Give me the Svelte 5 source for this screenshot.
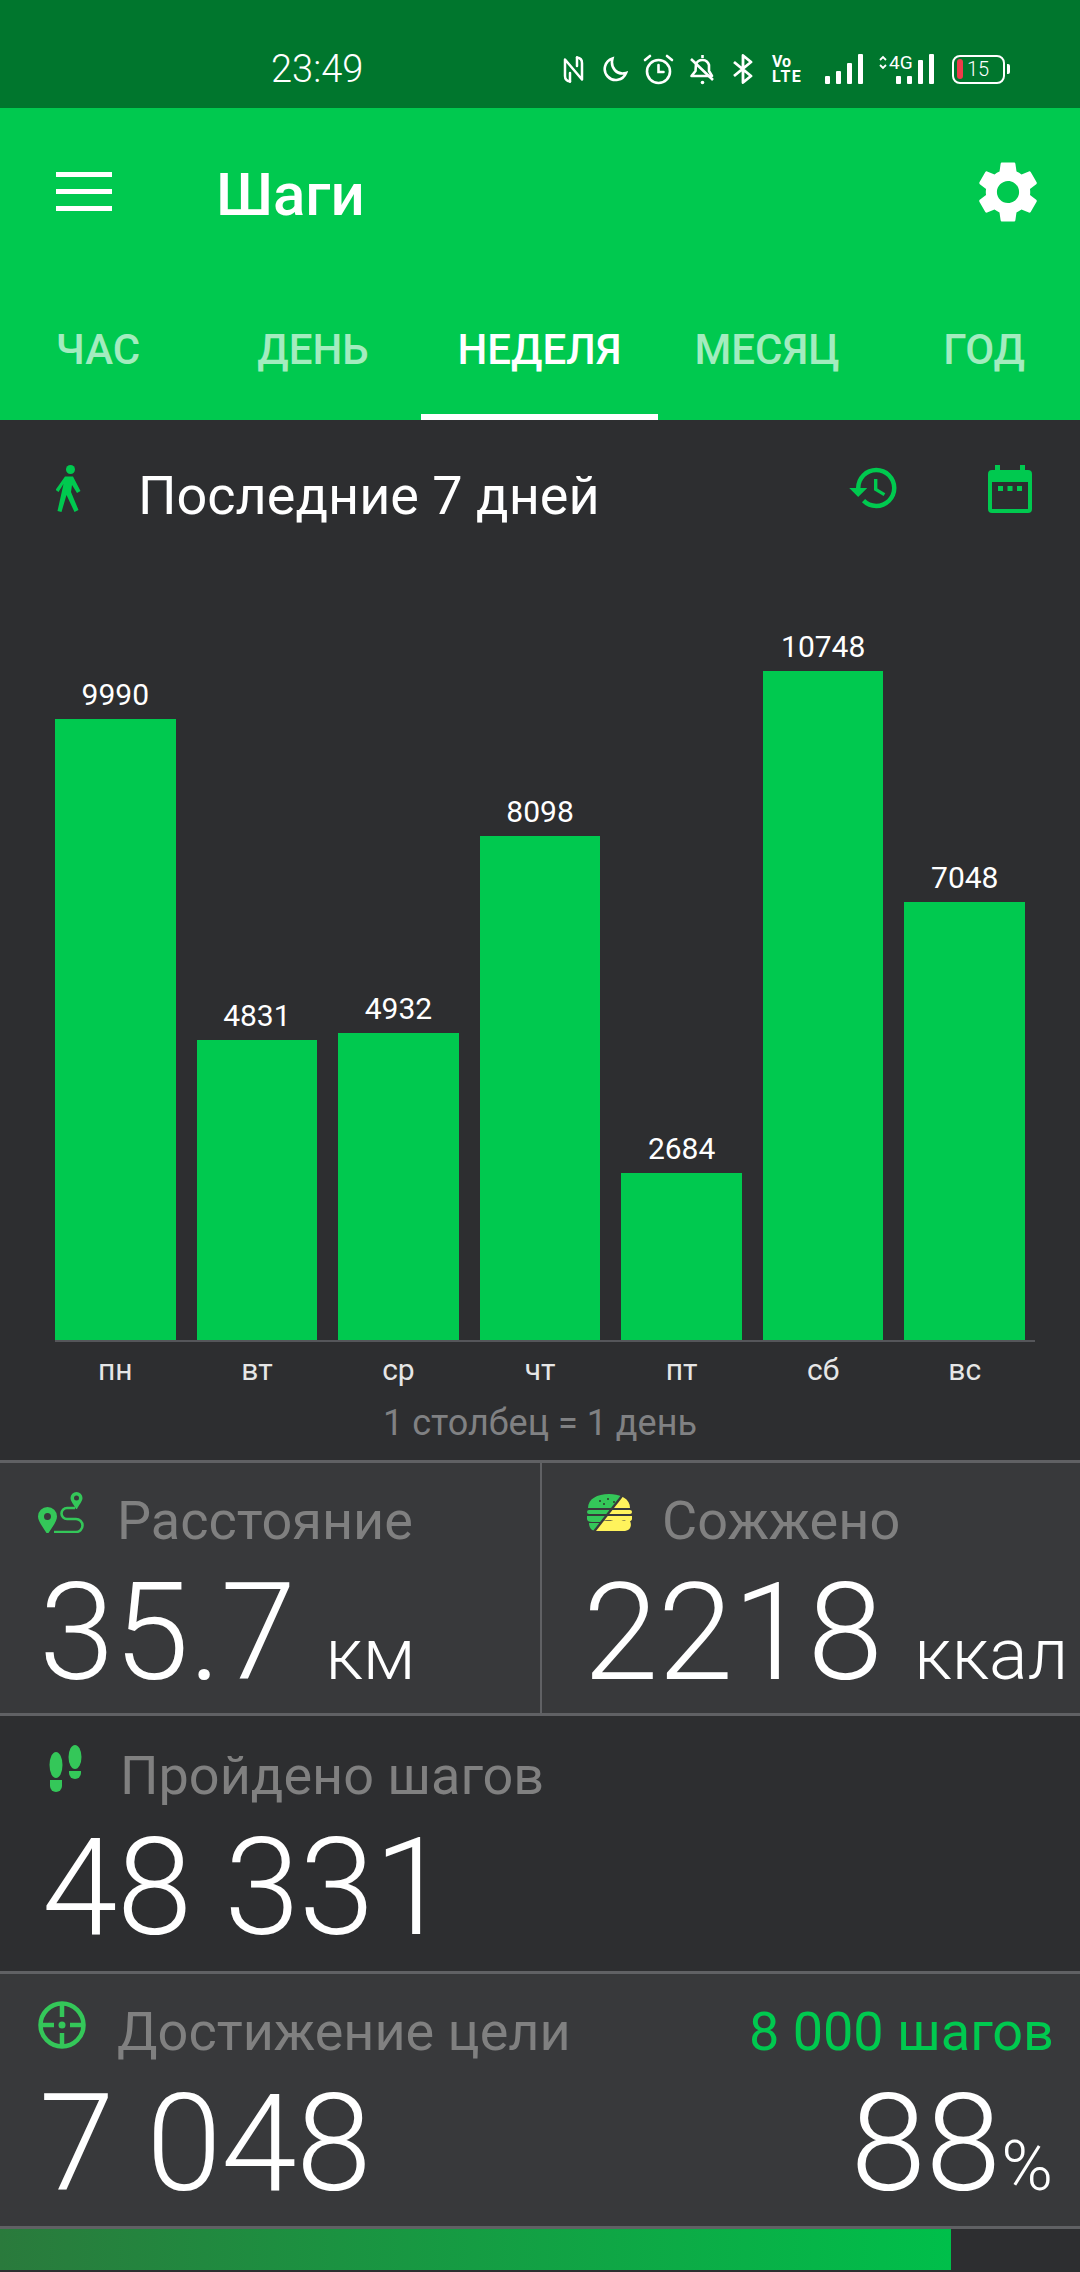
<script>
  const tabs = ["ЧАС", "ДЕНЬ", "НЕДЕЛЯ", "МЕСЯЦ", "ГОД"];
  const days = [
    { day: "пн", steps: 9990 },
    { day: "вт", steps: 4831 },
    { day: "ср", steps: 4932 },
    { day: "чт", steps: 8098 },
    { day: "пт", steps: 2684 },
    { day: "сб", steps: 10748 },
    { day: "вс", steps: 7048 }
  ];
  const scale = 0.0622;
</script>

<div class="page">
  <div class="status">
    <span class="time">23:49</span>
    <div class="sysicons">
      <svg class="ic-nfc" viewBox="0 0 21 27" width="21" height="27" fill="none" stroke="#fff" stroke-width="2.500" stroke-linejoin="round" stroke-linecap="round">
        <path d="M7 25.500C3.500 25 2 23.500 2 20V3.500L19 23.500V7C19 3.500 17.500 2 14 1.500" />
        <path d="M7 17v8.500M14 1.500V10" />
      </svg>
      <svg class="ic-moon" viewBox="0 0 26 26" width="26" height="26" fill="none" stroke="#fff" stroke-width="2.600">
        <path d="M10.500 2.500a11 11 0 1 0 13.500 14.500C15 19.500 8 12 10.500 2.500z" />
      </svg>
      <svg class="ic-alarm" viewBox="0 0 31 31" width="31" height="31" fill="none" stroke="#fff" stroke-width="2.600" stroke-linecap="round">
        <circle cx="15.500" cy="17.500" r="11.500" />
        <path d="M15.500 11v7h5M2 6l5-4M29 6l-5-4" />
      </svg>
      <svg class="ic-bell" viewBox="0 0 27 31" width="27" height="31" fill="none" stroke="#fff" stroke-width="2.600" stroke-linejoin="round">
        <path d="M7 10a7 7 0 0 1 13 1v6l3 5H2.500l4-5z" />
        <path d="M2 5l22 21M13.500 1v3" />
        <circle cx="13.500" cy="28.500" r="1.800" fill="#fff" stroke="none" />
      </svg>
      <svg class="ic-bt" viewBox="0 0 22 30" width="22" height="30" fill="none" stroke="#fff" stroke-width="2.800" stroke-linejoin="round">
        <path d="M2 8l17 14-8 6.500V1.500L19 8 2 22" />
      </svg>
      <div class="volte"><span>Vo</span><span class="lte">LTE</span></div>
      <div class="signal">
        <i class="s1"></i><i class="s2"></i><i class="s3"></i><i class="s4"></i>
      </div>
      <div class="net">
        <svg viewBox="0 0 8 15" width="8" height="15" fill="none" stroke="#fff" stroke-width="1.800">
          <path d="M1 5l3-3 3 3M1 10l3 3 3-3" />
        </svg>
        <span>4G</span>
        <div class="signal small">
          <i class="s1"></i><i class="s2"></i><i class="s3"></i><i class="s4"></i>
        </div>
      </div>
      <div class="battery">
        <div class="cell"><i></i><span>15</span></div>
        <b></b>
      </div>
    </div>
  </div>

  <header class="appbar">
    <div class="toolbar">
      <div class="menu"><i></i><i></i><i></i></div>
      <h1>Шаги</h1>
      <svg class="gear" viewBox="0 0 24 24" width="74" height="74" fill="#fff">
        <path d="M19.14 12.94c.04-.3.06-.61.06-.94 0-.32-.02-.64-.07-.94l2.03-1.58c.18-.14.23-.41.12-.61l-1.92-3.32c-.12-.22-.37-.29-.59-.22l-2.39.96c-.5-.38-1.03-.7-1.62-.94l-.36-2.54c-.04-.24-.24-.41-.48-.41h-3.84c-.24 0-.43.17-.47.41l-.36 2.54c-.59.24-1.13.57-1.62.94l-2.39-.96c-.22-.08-.47 0-.59.22L2.74 8.87c-.12.21-.08.47.12.61l2.03 1.58c-.05.3-.09.63-.09.94s.02.64.07.94l-2.03 1.58c-.18.14-.23.41-.12.61l1.92 3.32c.12.22.37.29.59.22l2.39-.96c.5.38 1.03.7 1.62.94l.36 2.54c.05.24.24.41.48.41h3.84c.24 0 .44-.17.47-.41l.36-2.54c.59-.24 1.13-.56 1.62-.94l2.39.96c.22.08.47 0 .59-.22l1.92-3.32c.12-.22.07-.47-.12-.61l-2.01-1.58zM12 15.6c-1.98 0-3.6-1.62-3.6-3.6s1.62-3.6 3.6-3.6 3.6 1.62 3.6 3.6-1.62 3.6-3.6 3.6z" />
      </svg>
    </div>
    <nav class="tabs">
      {#each tabs as tab, i}
        <div class="tab" class:active={i === 2}>{tab}</div>
      {/each}
    </nav>
  </header>

  <section class="range">
    <svg class="walk" viewBox="0 0 26 48" width="26" height="48">
      <circle cx="14.500" cy="4.500" r="4.500" fill="#00c94f" />
      <path d="M9 11.500h8l7.500 14.500-3.500 2-5-8-1 7 7.500 18-4 2-8-17-5 17-4-1 6-27-5 8-3-2z" fill="#00c94f" />
    </svg>
    <h2>Последние 7 дней</h2>
    <svg class="history" viewBox="0 0 24 24" width="54" height="54" fill="#00c94f">
      <path d="M13 3a9 9 0 0 0-9 9H1l3.890 3.890.07.14L9 12H6c0-3.870 3.130-7 7-7s7 3.130 7 7-3.130 7-7 7c-1.930 0-3.680-.79-4.940-2.060l-1.420 1.420A8.954 8.954 0 0 0 13 21a9 9 0 0 0 0-18zm-1 5v5l4.280 2.540.72-1.210-3.500-2.080V8H12z" />
    </svg>
    <svg class="calendar" viewBox="0 0 44 48" width="44" height="48" fill="#00c94f">
      <path d="M7 0h5v5h20V0h5v5h3a4 4 0 0 1 4 4v35a4 4 0 0 1-4 4H4a4 4 0 0 1-4-4V9a4 4 0 0 1 4-4h3zM4 17v27h36V17z" fill-rule="evenodd" />
      <rect x="10" y="21" width="5" height="5" /><rect x="19.500" y="21" width="5" height="5" /><rect x="29" y="21" width="5" height="5" />
    </svg>
  </section>

  <section class="chart">
    {#each days as d}
      <div class="col">
        <span class="val">{d.steps}</span>
        <div class="bar" style="height: {d.steps * scale}px"></div>
      </div>
    {/each}
  </section>
  <div class="baseline"></div>
  <div class="axis">
    {#each days as d}
      <span>{d.day}</span>
    {/each}
  </div>
  <div class="note">1 столбец = 1 день</div>

  <section class="stat split">
    <div class="half left">
      <div class="label">
        <svg class="pin" viewBox="0 0 49 41" width="49" height="41">
          <path d="M9.500 15a9.500 9.500 0 0 1 9.500 9.500c0 5-5 11-8.500 16.500h-2C5 35 0 29.500 0 24.500A9.500 9.500 0 0 1 9.500 15z M9.500 21a3.500 3.500 0 1 0 0 7 3.500 3.500 0 0 0 0-7z" fill="#34c759" fill-rule="evenodd" />
          <path d="M38.500 0a6 6 0 0 1 6 6c0 3-3.500 7-5.500 11h-1c-2-4-5.500-8-5.500-11a6 6 0 0 1 6-6z M38.500 3.500a2.500 2.500 0 1 0 0 5 2.500 2.500 0 0 0 0-5z" fill="#34c759" fill-rule="evenodd" />
          <path d="M37 16H29a5.500 5.500 0 0 0 0 11h9a6.500 6.500 0 0 1 0 13H16" fill="none" stroke="#34c759" stroke-width="2.600" />
        </svg>
        <span>Расстояние</span>
      </div>
      <div class="value"><span class="num">35.7</span><span class="unit">км</span></div>
    </div>
    <div class="half right">
      <div class="label">
        <svg class="burger" viewBox="0 0 45 37" width="45" height="37">
          <defs>
            <clipPath id="tl"><path d="M0 0H35L6 37H0z" /></clipPath>
            <clipPath id="br"><path d="M38 0H45V37H9z" /></clipPath>
          </defs>
          <g clip-path="url(#tl)" fill="#34c759">
            <path d="M1 14C1 5 10 0 22 0s21 5 21 14z" />
            <rect x="0" y="16" width="45" height="4" rx="2" />
            <path d="M0 22h45v3c0 2-3 3-5 3H5c-3 0-5-1-5-3z" />
            <path d="M2 29h41c0 5-3 8-7 8H9c-4 0-7-3-7-8z" />
          </g>
          <g fill="#2e3a2c">
            <circle cx="13" cy="7" r="1" /><circle cx="21" cy="5" r="1" /><circle cx="27" cy="8" r="1" /><circle cx="17" cy="10" r="1" />
          </g>
          <g clip-path="url(#br)" fill="#fff35c">
            <path d="M1 14C1 5 10 0 22 0s21 5 21 14z" />
            <rect x="0" y="16" width="45" height="4" rx="2" />
            <path d="M14 22h31v3c0 2-3 3-6 2-5-2-6 3-10 1-4-2-8-2-15-1H5z" />
            <path d="M5 27h38c2 4 1 10-7 10H9z" />
          </g>
        </svg>
        <span>Сожжено</span>
      </div>
      <div class="value"><span class="num">2218</span><span class="unit">ккал</span></div>
    </div>
  </section>

  <section class="stat steps">
    <div class="label">
      <svg class="feet" viewBox="0 0 34 47" width="34" height="47" fill="#34c759">
        <ellipse cx="7" cy="20" rx="6.500" ry="13" />
        <path d="M1 35h12v6a6 6 0 0 1-12 0z" />
        <ellipse cx="26" cy="12" rx="6.500" ry="12" />
        <path d="M20 26h12v2a6 6 0 0 1-12 0z" />
      </svg>
      <span>Пройдено шагов</span>
    </div>
    <div class="value"><span class="num">48 331</span></div>
  </section>

  <section class="stat goal">
    <div class="label">
      <svg class="target" viewBox="0 0 48 48" width="48" height="48" fill="none" stroke="#34c759" stroke-width="4.500">
        <circle cx="24" cy="24" r="21.500" />
        <path d="M24 4v12M24 32v12M4 24h12M32 24h12" />
        <circle cx="24" cy="24" r="3.500" fill="#34c759" stroke="none" />
      </svg>
      <span>Достижение цели</span>
      <span class="target-text">8 000 шагов</span>
    </div>
    <div class="value between">
      <span class="num">7 048</span>
      <span class="pct"><span class="num">88</span><span class="sign">%</span></span>
    </div>
  </section>

  <div class="progress"><div class="fill" style="width: {(7048 / 8000) * 1080}px"></div></div>
</div>

<style>
  :global(body) {
    margin: 0;
    background: #2d2e30;
  }
  .page {
    width: 1080px;
    height: 2272px;
    overflow: hidden;
    font-family: Roboto, "Noto Sans", sans-serif;
    color: #fff;
    background: #2d2e30;
    display: flex;
    flex-direction: column;
  }

  .status {
    height: 108px;
    flex: none;
    background: #00762d;
    display: flex;
    align-items: center;
    padding-left: 271px;
    box-sizing: border-box;
  }
  .time {
    font-size: 38px;
    font-weight: 300;
    width: 292px;
    position: relative;
    top: 15px;
  }
  .sysicons {
    display: flex;
    align-items: center;
    height: 34px;
    margin-top: 30px;
  }
  .ic-moon { margin-left: 18px; }
  .ic-alarm { margin-left: 15px; }
  .ic-bell { margin-left: 15px; }
  .ic-bt { margin-left: 16px; }
  .volte {
    margin-left: 18px;
    width: 35px;
    font-size: 16px;
    font-weight: 700;
    line-height: 15px;
    display: flex;
    flex-direction: column;
  }
  .lte { letter-spacing: 1.500px; }
  .signal {
    margin-left: 18px;
    display: flex;
    align-items: flex-end;
    gap: 6px;
    height: 30px;
  }
  .signal i {
    width: 5px;
    background: #fff;
    border-radius: 1px;
  }
  .s1 { height: 8px; }
  .s2 { height: 13px; }
  .s3 { height: 21px; }
  .s4 { height: 30px; }
  .net {
    margin-left: 16px;
    display: flex;
    align-items: flex-start;
    position: relative;
    width: 55px;
    height: 30px;
    font-size: 19px;
    line-height: 18px;
  }
  .net svg { margin-right: 2px; margin-top: 1px; flex: none; }
  .signal.small {
    position: absolute;
    right: 0;
    top: 0;
    margin: 0;
    gap: 6px;
  }
  .signal.small .s1,
  .signal.small .s2 { height: 8px; }
  .signal.small .s3 { height: 24px; }
  .signal.small .s4 { height: 30px; }
  .net > span { position: relative; }
  .battery {
    margin-left: 18px;
    display: flex;
    align-items: center;
  }
  .cell {
    width: 53px;
    height: 29px;
    border: 2.500px solid #fff;
    border-radius: 8px;
    display: flex;
    align-items: center;
    gap: 4px;
    padding-left: 3px;
    box-sizing: border-box;
    font-size: 20px;
    font-weight: 300;
  }
  .cell i {
    width: 6px;
    height: 20px;
    background: #ef3b4a;
    border-radius: 3px;
  }
  .battery b {
    width: 3px;
    height: 10px;
    background: #fff;
    margin-left: 2px;
    border-radius: 0 2px 2px 0;
  }

  .appbar {
    height: 312px;
    flex: none;
    background: #00c94f;
    display: flex;
    flex-direction: column;
  }
  .toolbar {
    height: 210px;
    display: flex;
    align-items: flex-start;
    padding-left: 56px;
    position: relative;
  }
  .menu {
    width: 56px;
    margin-top: 64px;
    display: flex;
    flex-direction: column;
    gap: 12px;
  }
  .menu i {
    height: 5px;
    background: #fff;
  }
  h1 {
    margin: 54px 0 0 104px;
    font-size: 60px;
    line-height: 66px;
    font-weight: 500;
  }
  .gear {
    position: absolute;
    left: 971px;
    top: 47px;
  }
  .tabs {
    flex: 1;
    display: flex;
    align-items: flex-start;
    font-size: 42px;
    font-weight: 500;
    line-height: 48px;
    color: #a3ecbf;
  }
  .tab {
    text-align: center;
    padding-top: 8px;
    height: 102px;
    box-sizing: border-box;
    border-bottom: 6px solid transparent;
  }
  .tab:nth-child(1) { width: 196px; }
  .tab:nth-child(2) { width: 216px; margin-left: 9px; }
  .tab:nth-child(3) { width: 237px; }
  .tab:nth-child(4) { width: 218px; }
  .tab:nth-child(5) { width: 190px; margin-left: 13px; }
  .tab.active {
    color: #fff;
    border-bottom-color: #fff;
  }

  .range {
    height: 110px;
    flex: none;
    display: flex;
    align-items: flex-start;
    position: relative;
  }
  .walk {
    margin: 45px 0 0 56px;
  }
  h2 {
    margin: 46px 0 0 56px;
    font-size: 54px;
    line-height: 60px;
    font-weight: 400;
  }
  .history {
    position: absolute;
    left: 847px;
    top: 41px;
  }
  .calendar {
    position: absolute;
    left: 988px;
    top: 45px;
  }

  .chart {
    height: 810px;
    flex: none;
    display: flex;
    align-items: flex-end;
    gap: 21px;
    padding: 0 55px;
    box-sizing: border-box;
  }
  .baseline {
    height: 2px;
    flex: none;
    width: 980px;
    margin-left: 55px;
    background: #55565a;
  }
  .col {
    flex: 1;
    display: flex;
    flex-direction: column;
    align-items: center;
  }
  .val {
    font-size: 30px;
    line-height: 36px;
    margin-bottom: 6px;
  }
  .bar {
    width: 100%;
    background: #00c94f;
  }
  .axis {
    display: flex;
    gap: 21px;
    padding: 10px 55px 0;
    font-size: 30px;
    line-height: 36px;
    color: #e6e6e6;
  }
  .axis span {
    flex: 1;
    text-align: center;
  }
  .note {
    margin-top: 15px;
    text-align: center;
    font-size: 36px;
    line-height: 40px;
    color: #808183;
    height: 57px;
  }

  .stat {
    flex: none;
    box-sizing: border-box;
    border-top: 3px solid #606164;
  }
  .split {
    height: 253px;
    display: flex;
    background: #38393b;
  }
  .half {
    padding-top: 28px;
    box-sizing: border-box;
  }
  .half.left {
    width: 542px;
    border-right: 2px solid #606164;
    padding-left: 38px;
  }
  .half.right {
    flex: 1;
    padding-left: 45px;
  }
  .steps {
    height: 258px;
    padding: 30px 0 0 49px;
  }
  .goal {
    height: 255px;
    background: #38393b;
    padding: 28px 26px 0 38px;
  }
  .label {
    display: flex;
    align-items: flex-start;
    font-size: 54px;
    line-height: 60px;
    color: #808080;
  }
  .label svg {
    flex: none;
    margin-right: 30px;
  }
  .label .pin { margin-top: 1px; margin-right: 30px; }
  .label .burger { margin-top: 3px; margin-right: 30px; }
  .label .feet { margin-top: -1px; margin-right: 37px; }
  .label .target { margin-top: -1px; margin-right: 31px; }
  .target-text {
    margin-left: auto;
    color: #00c94f;
  }
  .value {
    margin-top: 14px;
    display: flex;
    align-items: baseline;
    font-size: 136px;
    line-height: 136px;
    font-weight: 300;
    letter-spacing: -0.600px;
  }
  .half.left .value { margin-left: 1px; }
  .half.right .value { margin-left: -4px; }
  .steps .value { margin-left: -7px; }
  .goal .value { margin-left: 1px; margin-top: 14px; }
  .between { justify-content: space-between; }
  .unit {
    font-size: 72px;
    letter-spacing: 0;
  }
  .left .unit { margin-left: 30px; }
  .right .unit { margin-left: 32px; }
  .pct { margin-right: 1px; }
  .sign {
    font-size: 70px;
    letter-spacing: 0;
    margin-left: 1px;
  }

  .progress {
    height: 44px;
    flex: none;
    box-sizing: border-box;
    border-top: 3px solid #606164;
  }
  .fill {
    height: 100%;
    background: linear-gradient(90deg, #2a7a3c, #00bf4a);
  }
</style>
